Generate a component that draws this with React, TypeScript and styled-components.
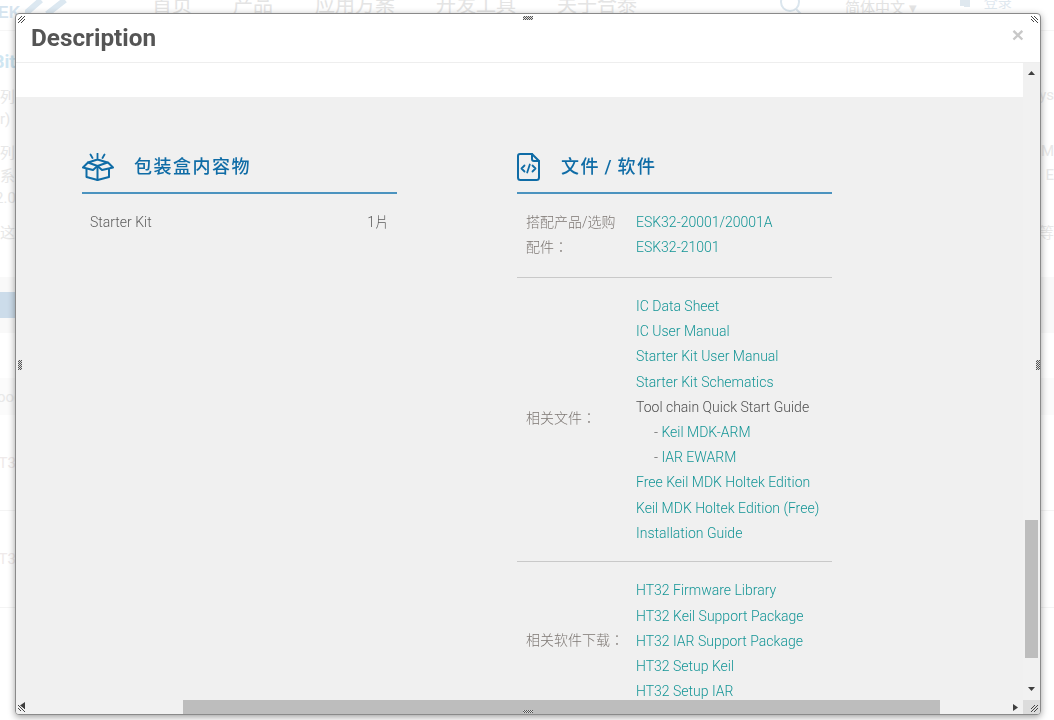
import React from "react";
import styled, { createGlobalStyle } from "styled-components";

const Global = createGlobalStyle`
  html, body { margin: 0; padding: 0; background: #fff; }
  body { font-family: Roboto, "Noto Sans CJK TC", sans-serif; font-size: 14px; }
`;

const CJK = `Roboto, "Noto Sans CJK TC", sans-serif`;

/* ---------- faded page behind the dialog ---------- */
const Page = styled.div`
  width: 1054px;
  height: 720px;
  overflow: hidden;
  display: flex;
  flex-direction: column;
  color: #e6e6e6;
  font-family: ${CJK};
`;
const Header = styled.header`
  height: 30px;
  flex: none;
  display: flex;
  align-items: flex-start;
  border-bottom: 1px solid #f6f6f6;
  margin-bottom: 18px;
`;
const Logo = styled.div`
  width: 152px;
  height: 30px;
  flex: none;
  display: flex;
  align-items: flex-start;
  overflow: hidden;
`;
const LogoMark = styled.span`
  font-family: "Liberation Sans", sans-serif;
  font-size: 16px;
  line-height: 16px;
  font-weight: 700;
  color: #d6e4ef;
  margin: 5px 0 0 -2px;
  flex: none;
  width: 27px;
`;
const NavLabel = styled.span<{ $w: number }>`
  width: ${(p) => p.$w}px;
  flex: none;
  font-size: 20px;
  line-height: 20px;
  margin-top: -5px;
  color: #e4e4e4;
`;
const HeaderTools = styled.div`
  display: flex;
  align-items: flex-start;
  margin-left: 103px;
  color: #e3e3e3;
  font-size: 14px;
`;
const LangLabel = styled.span`
  margin: 0 0 0 41px;
  font-size: 15px;
  line-height: 16px;
  white-space: nowrap;
`;
const LoginLabel = styled.span`
  font-size: 14px;
  line-height: 14px;
  margin: -5px 0 0 10px;
  color: #dfe8ef;
`;
const LoginIcon = styled.svg`
  width: 14px;
  height: 8px;
  flex: none;
  margin-left: 43px;
  fill: #dfe8ef;
`;
const Row = styled.div<{ $h: number; $bg?: string; $line?: boolean; $mt?: number }>`
  height: ${(p) => p.$h}px;
  flex: none;
  margin-top: ${(p) => p.$mt || 0}px;
  display: flex;
  align-items: center;
  justify-content: space-between;
  background: ${(p) => p.$bg || "transparent"};
  border-bottom: ${(p) => (p.$line ? "1px solid #f4f4f4" : "0")};
  white-space: nowrap;
  box-sizing: border-box;
`;
const Frag = styled.span<{ $color?: string; $size?: number; $bold?: boolean; $shift?: number }>`
  color: ${(p) => p.$color || "#e8e8e8"};
  font-size: ${(p) => p.$size || 15}px;
  font-weight: ${(p) => (p.$bold ? 700 : 400)};
  margin-left: ${(p) => p.$shift || 0}px;
`;
const Chip = styled.div`
  width: 16px;
  height: 26px;
  background: #ccdcea;
`;

/* ---------- dialog ---------- */
const Dialog = styled.div`
  position: fixed;
  left: 15px;
  top: 13px;
  width: 1026px;
  height: 702px;
  box-sizing: border-box;
  border: 1px solid #8a8a8a;
  border-radius: 4px;
  background: #fff;
  box-shadow: 0 2px 7px rgba(0, 0, 0, 0.38);
  display: flex;
  flex-direction: column;
  overflow: hidden;
`;
const TitleBar = styled.div`
  height: 48px;
  flex: none;
  box-sizing: content-box;
  border-bottom: 1px solid #eeeeee;
  display: flex;
  align-items: center;
  justify-content: space-between;
  padding: 0 16px 0 15px;
`;
const Title = styled.h4`
  margin: 0;
  font-family: Roboto, sans-serif;
  font-size: 24.300px;
  line-height: 48px;
  font-weight: 700;
  color: #555;
`;
const Close = styled.span`
  font-family: "Liberation Sans", sans-serif;
  font-size: 21px;
  font-weight: 700;
  line-height: 21px;
  color: #c8c8c8;
  margin-top: -8px;
`;
const Frame = styled.div`
  flex: 1;
  min-height: 0;
  display: grid;
  grid-template-columns: 1fr 17px;
  grid-template-rows: 1fr 14px;
`;
const Viewport = styled.div`
  overflow: hidden;
  background: #f0f0f0;
`;
const WhiteStrip = styled.div`
  height: 34px;
  background: #fff;
`;
const Columns = styled.div`
  display: flex;
  align-items: flex-start;
  gap: 120px;
  padding: 56px 0 0 66px;
`;
const Column = styled.section`
  width: 315px;
  flex: none;
`;
const Heading = styled.div`
  height: 39px;
  box-sizing: content-box;
  display: flex;
  align-items: flex-start;
  border-bottom: 2px solid #4b93bf;
`;
const HeadingIcon = styled.svg<{ $w: number }>`
  width: ${(p) => p.$w}px;
  height: 28px;
  flex: none;
  display: block;
`;
const HeadingText = styled.h3<{ $gap: number }>`
  margin: 0 0 0 ${(p) => p.$gap}px;
  font-family: ${CJK};
  font-size: 18px;
  font-weight: 500;
  line-height: 28px;
  letter-spacing: 1.500px;
  word-spacing: -1.500px;
  color: #0f6ca6;
`;
const ItemRow = styled.div`
  display: flex;
  justify-content: space-between;
  padding: 16px 8px 0 8px;
  font-weight: 300;
  line-height: 25px;
  color: #5c5c5c;
`;
const SpecRow = styled.div<{ $last?: boolean; $pt: number; $pb: number }>`
  display: flex;
  align-items: center;
  padding: ${(p) => p.$pt}px 0 ${(p) => p.$pb}px 9px;
  border-bottom: ${(p) => (p.$last ? "0" : "1px solid #c9c9c9")};
  line-height: 25.200px;
`;
const SpecLabel = styled.div<{ $lift?: number }>`
  width: 110px;
  flex: none;
  box-sizing: border-box;
  padding-right: 10px;
  margin-top: ${(p) => (p.$lift ? -p.$lift : 0)}px;
  color: #7d7773;
  font-weight: 300;
`;
const SpecValues = styled.div`
  display: flex;
  flex-direction: column;
  font-weight: 300;
  white-space: nowrap;
`;
const DocLink = styled.a`
  color: #149596;
  text-decoration: none;
`;
const Plain = styled.span`
  color: #4f4f4f;
`;
const Sub = styled.span`
  color: #666;
  padding-left: 18px;
`;

const VTrack = styled.div`
  background: #f1f1f1;
  display: flex;
  flex-direction: column;
  align-items: center;
  padding-top: 6px;
`;
const VThumb = styled.div`
  width: 13px;
  height: 138px;
  margin-top: 442px;
  background: #bdbdbd;
`;
const ArrowDownSlot = styled.div`
  margin-top: 26px;
  display: flex;
`;
const HTrack = styled.div`
  background: #f1f1f1;
  display: flex;
  align-items: center;
  padding-left: 167px;
  padding-right: 3px;
  justify-content: space-between;
`;
const HThumb = styled.div`
  width: 757px;
  height: 14px;
  background: #bdbdbd;
`;
const Corner = styled.div`
  background: #dcdcdc;
`;
const Arrow = styled.svg`
  width: 9px;
  height: 9px;
  display: block;
  fill: #3f3f3f;
  flex: none;
`;
const Grip = styled.svg<{ $top?: string; $left?: string; $right?: string; $bottom?: string; $w: number; $h: number }>`
  position: absolute;
  width: ${(p) => p.$w}px;
  height: ${(p) => p.$h}px;
  top: ${(p) => p.$top || "auto"};
  left: ${(p) => p.$left || "auto"};
  right: ${(p) => p.$right || "auto"};
  bottom: ${(p) => p.$bottom || "auto"};
  stroke: #444;
  stroke-width: 1;
  fill: none;
`;
const DotGrip = styled.div<{ $top?: string; $left?: string; $right?: string; $bottom?: string; $w: number; $h: number }>`
  position: absolute;
  width: ${(p) => p.$w}px;
  height: ${(p) => p.$h}px;
  top: ${(p) => p.$top || "auto"};
  left: ${(p) => p.$left || "auto"};
  right: ${(p) => p.$right || "auto"};
  bottom: ${(p) => p.$bottom || "auto"};
  background-image: conic-gradient(#555 25%, #ddd 0 50%, #555 0 75%, #ddd 0);
  background-size: 2px 2px;
`;
const LeftArrowSlot = styled.div`
  position: absolute;
  left: 2px;
  bottom: 4px;
`;

const BoxIcon = () => (
  <HeadingIcon $w={32} viewBox="0 0 32 28" fill="none" stroke="#0f6ca6" strokeWidth="2" strokeLinejoin="round" strokeLinecap="round">
    <path d="M8.500 1.500l2 3.500M15.500 0.500v4.500M22.500 1.500l-2 3.500" strokeWidth="1.800" />
    <path d="M6 9.500l9.500-3 10 3-10 3.500z" />
    <path d="M6 9.500L1 14.500l10 2.500 4.500-4 4.500 4 11-2.500-5-5" />
    <path d="M4.500 16v8l11 3 11.500-3v-8" />
    <path d="M15.500 13v14" />
  </HeadingIcon>
);

const FileIcon = () => (
  <HeadingIcon $w={23} viewBox="0 0 23 28" fill="none" stroke="#0f6ca6" strokeWidth="2" strokeLinejoin="round" strokeLinecap="round">
    <path d="M3 1h12l7 7v16.500a2.500 2.500 0 0 1-2.500 2.500H3.500A2.500 2.500 0 0 1 1 24.500V3a2 2 0 0 1 2-2z" />
    <path d="M15 1v5a2 2 0 0 0 2 2h5" />
    <path d="M7.500 12.500L4.500 15.500l3 3M15.500 12.500l3 3-3 3M12.800 11.500l-2.600 8" strokeWidth="1.800" />
  </HeadingIcon>
);

const Hatch = ({ flip }: { flip: boolean }) =>
  flip ? <path d="M0 3l3 3M0 0l7 7M3 0l4 4" /> : <path d="M0 4l4-4M0 7l7-7M3 7l4-4" />;

const nav: [string, number][] = [
  ["首页", 81],
  ["产品", 82],
  ["应用方案", 121],
  ["开发工具", 121],
  ["关于合泰", 120],
];

const docs = ["IC Data Sheet", "IC User Manual", "Starter Kit User Manual", "Starter Kit Schematics"];
const docsAfter = ["Free Keil MDK Holtek Edition", "Keil MDK Holtek Edition (Free)", "Installation Guide"];
const software = [
  "HT32 Firmware Library",
  "HT32 Keil Support Package",
  "HT32 IAR Support Package",
  "HT32 Setup Keil",
  "HT32 Setup IAR",
];

export default function App() {
  return (
    <>
      <Global />
      <Page>
        <Header>
          <Logo>
            <LogoMark>EK</LogoMark>
            <svg width="60" height="14" viewBox="0 0 60 14" fill="none" stroke="#dce8f1" strokeWidth="6">
              <path d="M0 14L16 0M22 14L40 0" />
            </svg>
          </Logo>
          {nav.map(([t, w]) => (
            <NavLabel key={t} $w={w}>{t}</NavLabel>
          ))}
          <HeaderTools>
            <svg width="24" height="16" viewBox="0 0 24 16" fill="none" stroke="#dbe6ee" strokeWidth="2">
              <circle cx="10" cy="2" r="9" />
              <path d="M16 9l6 6" />
            </svg>
            <LangLabel>简体中文 ▾</LangLabel>
            <LoginIcon viewBox="0 0 14 8"><path d="M0 0h10v7H4V6H0z" /></LoginIcon>
            <LoginLabel>登录</LoginLabel>
          </HeaderTools>
        </Header>
        <Row $h={24}><Frag $color="#cfe6f2" $size={18} $bold $shift={-7}>Bit</Frag></Row>
        <Row $h={24} $mt={10}><Frag>列</Frag><Frag>ys</Frag></Row>
        <Row $h={24}><Frag>r)</Frag></Row>
        <Row $h={24} $mt={8}><Frag>列</Frag><Frag>M</Frag></Row>
        <Row $h={23}><Frag>系</Frag><Frag>E</Frag></Row>
        <Row $h={23}><Frag $shift={-5}>2.0</Frag></Row>
        <Row $h={24} $mt={10}><Frag>这</Frag><Frag>等</Frag></Row>
        <Row $h={56} $bg="#f9f9f9" $mt={34}><Chip /></Row>
        <Row $h={37} $bg="#fbfbfb" $mt={45}><Frag $shift={-3}>ood</Frag></Row>
        <Row $h={96} $line><Frag $color="#efeaea" $shift={-12}>HT3</Frag></Row>
        <Row $h={97} $line><Frag $color="#efeaea" $shift={-12}>HT3</Frag></Row>
      </Page>

      <Dialog>
        <TitleBar>
          <Title>Description</Title>
          <Close>×</Close>
        </TitleBar>
        <Frame>
          <Viewport>
            <WhiteStrip />
            <Columns>
              <Column>
                <Heading>
                  <BoxIcon />
                  <HeadingText $gap={20}>包装盒内容物</HeadingText>
                </Heading>
                <ItemRow>
                  <span>Starter Kit</span>
                  <span>1片</span>
                </ItemRow>
              </Column>
              <Column>
                <Heading>
                  <FileIcon />
                  <HeadingText $gap={21}>文件 / 软件</HeadingText>
                </Heading>
                <SpecRow $pt={16} $pb={17}>
                  <SpecLabel>搭配产品/选购配件：</SpecLabel>
                  <SpecValues>
                    <DocLink>ESK32-20001/20001A</DocLink>
                    <DocLink>ESK32-21001</DocLink>
                  </SpecValues>
                </SpecRow>
                <SpecRow $pt={15.6} $pb={15.4}>
                  <SpecLabel $lift={3}>相关文件：</SpecLabel>
                  <SpecValues>
                    {docs.map((d) => (
                      <DocLink key={d}>{d}</DocLink>
                    ))}
                    <Plain>Tool chain Quick Start Guide</Plain>
                    <Sub>- <DocLink>Keil MDK-ARM</DocLink></Sub>
                    <Sub>- <DocLink>IAR EWARM</DocLink></Sub>
                    {docsAfter.map((d) => (
                      <DocLink key={d}>{d}</DocLink>
                    ))}
                  </SpecValues>
                </SpecRow>
                <SpecRow $pt={16} $pb={16} $last>
                  <SpecLabel $lift={2}>相关软件下载：</SpecLabel>
                  <SpecValues>
                    {software.map((d) => (
                      <DocLink key={d}>{d}</DocLink>
                    ))}
                  </SpecValues>
                </SpecRow>
              </Column>
            </Columns>
          </Viewport>
          <VTrack>
            <Arrow viewBox="0 0 9 9"><path d="M4.500 2L8 6H1z" /></Arrow>
            <VThumb />
            <ArrowDownSlot>
              <Arrow viewBox="0 0 9 9"><path d="M1 3h7L4.500 7z" /></Arrow>
            </ArrowDownSlot>
          </VTrack>
          <HTrack>
            <HThumb />
            <Arrow viewBox="0 0 9 9"><path d="M2 1l5 3.500L2 8z" /></Arrow>
          </HTrack>
          <Corner />
        </Frame>
        <Grip $w={7} $h={7} $top="2px" $left="2px" viewBox="0 0 7 7"><Hatch flip={false} /></Grip>
        <Grip $w={7} $h={7} $top="2px" $right="2px" viewBox="0 0 7 7"><Hatch flip /></Grip>
        <Grip $w={7} $h={7} $bottom="2px" $left="2px" viewBox="0 0 7 7"><Hatch flip /></Grip>
        <Grip $w={7} $h={7} $bottom="2px" $right="2px" viewBox="0 0 7 7"><Hatch flip={false} /></Grip>
        <DotGrip $w={10} $h={4} $top="2px" $left="507px" />
        <DotGrip $w={10} $h={3} $bottom="1px" $left="507px" />
        <DotGrip $w={4} $h={10} $top="346px" $left="2px" />
        <DotGrip $w={4} $h={10} $top="346px" $right="0px" />
        <LeftArrowSlot>
          <Arrow viewBox="0 0 9 9"><path d="M7 1v7L2 4.500z" /></Arrow>
        </LeftArrowSlot>
      </Dialog>
    </>
  );
}
